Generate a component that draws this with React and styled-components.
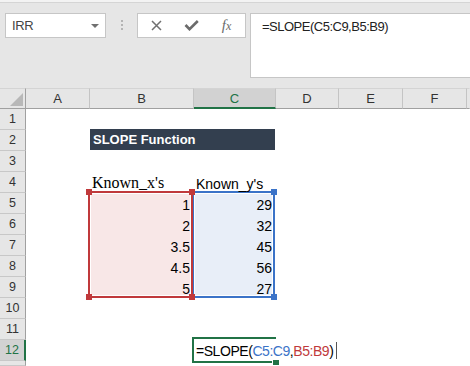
import React from 'react'
import styled, { createGlobalStyle } from 'styled-components'

const GREEN = '#217346'
const RED = '#c0393b'
const BLUE = '#3b73c8'

const GlobalStyle = createGlobalStyle`
  html, body {
    margin: 0;
    padding: 0;
    background: #fff;
  }
  body {
    width: 470px;
    height: 366px;
    overflow: hidden;
    font-family: "Liberation Sans", Arial, sans-serif;
  }
`

const Window = styled.div`
  width: 470px;
  height: 366px;
  overflow: hidden;
  display: flex;
  flex-direction: column;
  background: #e6e6e6;
`

const TopEdge = styled.div`
  flex-shrink: 0;
  height: 2px;
  background: #f3f3f3;
  border-bottom: 1px solid #d5d5d5;
`

const FormulaArea = styled.div`
  flex-shrink: 0;
  height: 85px;
  box-sizing: border-box;
  padding: 10px 0 0 5px;
  display: flex;
  align-items: flex-start;
`

const NameBox = styled.div`
  width: 101px;
  height: 25px;
  box-sizing: border-box;
  border: 1px solid #c6c6c6;
  background: #fff;
  display: flex;
  align-items: center;
  justify-content: space-between;
  padding: 0 6px;
  font-size: 13px;
  letter-spacing: -0.4px;
  color: #444;
`

const Grip = styled.div`
  width: 31px;
  height: 25px;
  display: flex;
  align-items: center;
  justify-content: center;

  &::before {
    content: '';
    width: 2px;
    height: 11px;
    background: repeating-linear-gradient(#b4b4b4 0 2px, transparent 2px 4px);
  }
`

const ButtonBox = styled.div`
  width: 109px;
  height: 25px;
  box-sizing: border-box;
  border: 1px solid #c6c6c6;
  background: #fff;
  display: grid;
  grid-template-columns: repeat(3, 1fr);
  align-items: center;
  justify-items: center;
  padding: 0 1px;
  color: #6b6b6b;
`

const Fx = styled.span`
  font-family: "Liberation Serif", "Times New Roman", serif;
  font-style: italic;
  font-size: 15px;
  color: #6b6b6b;

  & > small {
    font-size: 12px;
  }
`

const FormulaBox = styled.div`
  flex: 1;
  margin: 0 -10px 0 4px;
  height: 65px;
  box-sizing: border-box;
  border: 1px solid #c6c6c6;
  background: #fff;
  padding: 5px 0 0 11px;
  font-size: 13px;
  letter-spacing: -0.5px;
  line-height: 16px;
  color: #222;
`

const Sheet = styled.div`
  flex: 1;
  min-height: 0;
  display: grid;
  background: #fff;
  grid-template-columns: 26px 64px 104px 82px 63px 64px 64px 1fr;
  grid-template-rows: 21px repeat(12, 21px) 1fr;
`

const Corner = styled.div`
  grid-column: 1;
  grid-row: 1;
  box-sizing: border-box;
  background: #e6e6e6;
  border-top: 1px solid #d4d4d4;
  border-right: 1px solid #a0a0a0;
  border-bottom: 1px solid #a0a0a0;
  display: flex;
  align-items: flex-end;
  justify-content: flex-end;
  padding: 0 2px 2px 0;
`

const ColHead = styled.div`
  grid-row: 1;
  box-sizing: border-box;
  background: ${p => (p.$active ? '#d2d2d2' : '#e6e6e6')};
  border-top: 1px solid #d4d4d4;
  border-right: 1px solid ${p => (p.$last ? 'transparent' : '#c4c4c4')};
  border-bottom: ${p => (p.$active ? `2px solid ${GREEN}` : '1px solid #a0a0a0')};
  display: flex;
  align-items: center;
  justify-content: center;
  font-size: 13px;
  color: ${p => (p.$active ? GREEN : '#333')};
`

const RowHead = styled.div`
  grid-column: 1;
  box-sizing: border-box;
  background: ${p => (p.$active ? '#d2d2d2' : '#e6e6e6')};
  border-right: ${p => (p.$active ? `2px solid ${GREEN}` : '1px solid #a0a0a0')};
  border-bottom: 1px solid #c8c8c8;
  display: flex;
  align-items: center;
  justify-content: center;
  font-size: 12.5px;
  color: ${p => (p.$active ? GREEN : '#333')};
`

const Title = styled.div`
  grid-column: 3 / 5;
  grid-row: 3;
  margin: -1px 1px 1px 0;
  background: #333f4f;
  color: #fff;
  font-weight: bold;
  font-size: 13px;
  display: flex;
  align-items: center;
  padding-left: 3px;
`

const Cell = styled.div`
  grid-column: ${p => p.$col};
  grid-row: ${p => p.$row};
  position: relative;
  display: flex;
  align-items: flex-end;
  justify-content: ${p => (p.$right ? 'flex-end' : 'flex-start')};
  padding: 0 ${p => (p.$right ? '4px' : '0')} 1px 2px;
  font-family: ${p => (p.$serif ? '"Liberation Serif", "Times New Roman", serif' : 'inherit')};
  font-size: ${p => (p.$serif ? '16px' : '14px')};
  color: #000;
  white-space: nowrap;
`

const Range = styled.div`
  grid-column: ${p => p.$col};
  grid-row: 6 / 11;
  margin: -2px 1px 0 -2px;
  border: 2px solid ${p => p.$color};
  padding: 1px;
  background: ${p => p.$fill};
  background-clip: content-box;
  position: relative;
`

const Handle = styled.span`
  position: absolute;
  width: 6px;
  height: 6px;
  background: ${p => p.$color};
  ${p => (p.$bottom ? 'bottom: -4px;' : 'top: -4px;')}
  ${p => (p.$left ? 'left: -4px;' : 'right: -4px;')}
`

const EditBox = styled.div`
  grid-column: 4;
  grid-row: 13;
  margin: -3px 0 -2px -2px;
  border: 2px solid ${GREEN};
  border-right: none;
  position: relative;
`

const FillHandle = styled.span`
  position: absolute;
  right: -3px;
  bottom: -4px;
  width: 6px;
  height: 5px;
  background: ${GREEN};
  border-left: 1px solid #fff;
  border-top: 1px solid #fff;
`

const FormulaText = styled.div`
  grid-column: 4 / 7;
  grid-row: 13;
  position: relative;
  display: flex;
  align-items: center;
  padding-left: 2px;
  font-size: 14px;
  letter-spacing: -0.45px;
  color: #000;
  white-space: nowrap;
`

const Ref = styled.span`
  color: ${p => p.$color};
`

const Caret = styled.span`
  display: inline-block;
  width: 1px;
  height: 17px;
  margin-left: 3px;
  background: #555;
`

const columns = ['A', 'B', 'C', 'D', 'E', 'F', 'G']
const rows = Array.from({ length: 13 }, (_, i) => i + 1)

const xs = ['1', '2', '3.5', '4.5', '5']
const ys = ['29', '32', '45', '56', '27']

export default function App() {
  return (
    <Window>
      <GlobalStyle />
      <TopEdge />
      <FormulaArea>
        <NameBox>
          <span>IRR</span>
          <svg width="8" height="4" viewBox="0 0 8 4">
            <polygon points="0,0 8,0 4,4" fill="#707070" />
          </svg>
        </NameBox>
        <Grip />
        <ButtonBox>
          <svg width="11" height="11" viewBox="0 0 11 11">
            <path d="M1 1 L10 10 M10 1 L1 10" stroke="#707070" strokeWidth="1.5" fill="none" />
          </svg>
          <svg width="15" height="11" viewBox="0 0 15 11">
            <path d="M1.5 5 L5.5 9.2 L13.8 1" stroke="#6b6b6b" strokeWidth="2.6" fill="none" />
          </svg>
          <Fx>
            f<small>x</small>
          </Fx>
        </ButtonBox>
        <FormulaBox>=SLOPE(C5:C9,B5:B9)</FormulaBox>
      </FormulaArea>

      <Sheet>
        <Corner>
          <svg width="13" height="13" viewBox="0 0 13 13">
            <polygon points="13,0 13,13 0,13" fill="#b8b8b8" />
          </svg>
        </Corner>
        {columns.map((c, i) => (
          <ColHead key={c} style={{ gridColumn: i + 2 }} $active={c === 'C'} $last={c === 'G'}>
            {c === 'G' ? '' : c}
          </ColHead>
        ))}
        {rows.map(r => (
          <RowHead key={r} style={{ gridRow: r + 1 }} $active={r === 12}>
            {r < 13 ? r : ''}
          </RowHead>
        ))}

        <Title>SLOPE Function</Title>

        <Range $col={4} $color={BLUE} $fill="#e8eef8">
          <Handle $color={BLUE} />
          <Handle $color={BLUE} $bottom />
        </Range>
        <Range $col={3} $color={RED} $fill="#f8e7e7">
          <Handle $color={RED} $left />
          <Handle $color={RED} />
          <Handle $color={RED} $left $bottom />
          <Handle $color={RED} $bottom />
        </Range>

        <Cell $col={3} $row={5} $serif>Known_x's</Cell>
        <Cell $col={4} $row={5}>Known_y's</Cell>
        {xs.map((x, i) => (
          <Cell key={'x' + i} $col={3} $row={i + 6} $right>{x}</Cell>
        ))}
        {ys.map((y, i) => (
          <Cell key={'y' + i} $col={4} $row={i + 6} $right>{y}</Cell>
        ))}

        <EditBox>
          <FillHandle />
        </EditBox>
        <FormulaText>
          =SLOPE(<Ref $color={BLUE}>C5:C9</Ref>,<Ref $color={RED}>B5:B9</Ref>)
          <Caret />
        </FormulaText>
      </Sheet>
    </Window>
  )
}
